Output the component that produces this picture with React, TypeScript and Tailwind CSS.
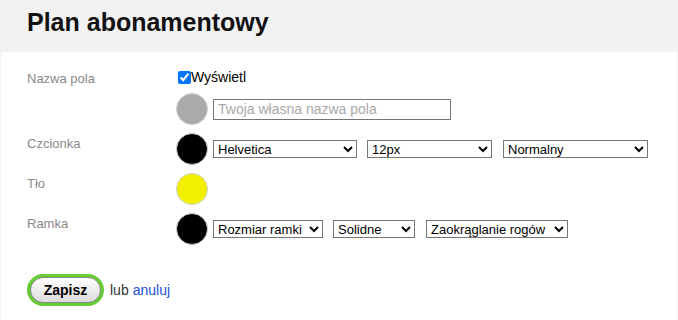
import { useState } from "react";

const selectClass =
  "h-[18px] border border-[#767676] bg-white text-[13px] leading-none text-black";

const Swatch = ({ color }: { color: string }) => (
  <span
    className={`block h-8 w-8 shrink-0 rounded-full border border-[#d0d0d0] ${color}`}
  />
);

const FieldLabel = ({ children }: { children: React.ReactNode }) => (
  <div className="w-[149px] shrink-0 pt-[3px] text-[13px] leading-4 text-[#8a8a8a]">
    {children}
  </div>
);

export default function App() {
  const [showName, setShowName] = useState(true);

  return (
    <div className="min-h-[320px] bg-[#f2f2f2] font-['Liberation_Sans',Arial,sans-serif]">
      <div className="h-[52px] px-[27px] pt-2">
        <h1 className="text-[25px] font-bold leading-[29px] text-[#111]">Plan abonamentowy</h1>
      </div>
      <div className="mx-px min-h-[268px] bg-white pl-[26px] pt-[17px]">
        <div className="flex">
          <div className="w-[150px] shrink-0 pt-[2px] text-[13px] leading-4 text-[#8a8a8a]">
            Nazwa pola
          </div>
          <div className="-ml-px flex flex-col">
            <label className="ml-px flex h-4 items-center text-[14px] leading-4 text-black">
              <input
                type="checkbox"
                checked={showName}
                onChange={(e) => setShowName(e.target.checked)}
                className="m-0 ml-[1px] h-[13px] w-[13px]"
              />
              Wyświetl
            </label>
            <div className="mt-2 flex items-center gap-[5px]">
              <Swatch color="bg-[#aaaaaa]" />
              <input
                type="text"
                placeholder="Twoja własna nazwa pola"
                className="h-[21px] w-[238px] border border-[#767676] px-1 text-[14px] text-black placeholder:text-[#a9a9a9]"
              />
            </div>
          </div>
        </div>

        <div className="mt-2 flex">
          <FieldLabel>Czcionka</FieldLabel>
          <div className="flex items-center">
            <Swatch color="bg-black" />
            <select className={`${selectClass} ml-[5px] w-[144px]`} defaultValue="Helvetica">
              <option>Helvetica</option>
              <option>Arial</option>
              <option>Georgia</option>
            </select>
            <select className={`${selectClass} ml-[10px] w-[125px]`} defaultValue="12px">
              <option>12px</option>
              <option>14px</option>
              <option>16px</option>
            </select>
            <select className={`${selectClass} ml-[11px] w-[145px]`} defaultValue="Normalny">
              <option>Normalny</option>
              <option>Pogrubiony</option>
            </select>
          </div>
        </div>

        <div className="mt-2 flex">
          <FieldLabel>Tło</FieldLabel>
          <Swatch color="bg-[#f0f000]" />
        </div>

        <div className="mt-2 flex">
          <FieldLabel>Ramka</FieldLabel>
          <div className="flex items-center">
            <Swatch color="bg-black" />
            <select className={`${selectClass} ml-[5px] w-[110px]`}>
              <option>Rozmiar ramki</option>
            </select>
            <select className={`${selectClass} ml-[10px] w-[82px]`}>
              <option>Solidne</option>
              <option>Kropkowane</option>
            </select>
            <select className={`${selectClass} ml-[11px] w-[142px]`}>
              <option>Zaokrąglanie rogów</option>
            </select>
          </div>
        </div>

        <div className="mt-[29px] flex items-center text-[14px]">
          <span className="rounded-full bg-[#66cc33] p-[3px]">
            <button
              type="button"
              className="block h-[26px] w-[71px] rounded-full border border-[#888] bg-gradient-to-b from-white to-[#dcdcdc] text-[14px] font-bold text-black"
            >
              Zapisz
            </button>
          </span>
          <span className="ml-[6px] text-[#333]">lub</span>
          <a href="#" className="ml-1 text-[#1a4fd6]">
            anuluj
          </a>
        </div>
      </div>
    </div>
  );
}
